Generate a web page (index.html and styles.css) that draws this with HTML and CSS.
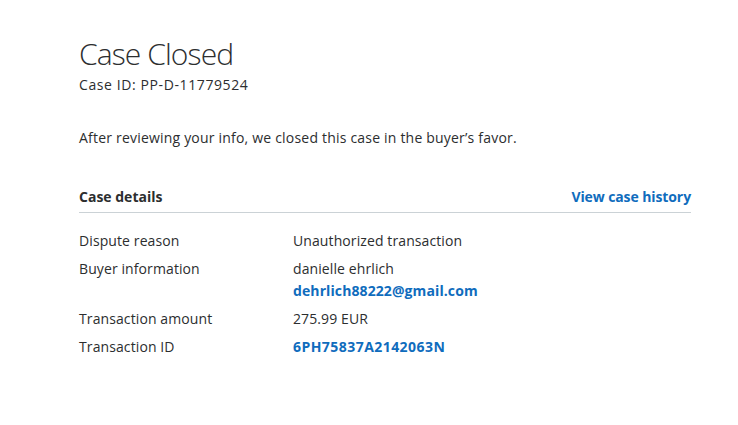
FILE: index.html
```html
<!DOCTYPE html>
<html>
<head>
<meta charset="utf-8">
<link rel="stylesheet" href="styles.css">
</head>
<body>
<main class="page">
  <h1 class="title">Case Closed</h1>
  <div class="case-id">Case ID: PP-D-11779524</div>
  <p class="summary">After reviewing your info, we closed this case in the buyer’s favor.</p>
  <div class="section-head">
    <span class="section-title">Case details</span>
    <a class="link link-history" href="#">View case history</a>
  </div>
  <dl class="details">
    <dt>Dispute reason</dt>
    <dd>Unauthorized transaction</dd>
    <dt>Buyer information</dt>
    <dd>danielle ehrlich<br><a class="link" href="#">dehrlich88222@gmail.com</a></dd>
    <dt>Transaction amount</dt>
    <dd>275.99 EUR</dd>
    <dt>Transaction ID</dt>
    <dd><a class="link link-id" href="#">6PH75837A2142063N</a></dd>
  </dl>
</main>
</body>
</html>
```
FILE: styles.css
```css
html, body {
  margin: 0;
  padding: 0;
  background: #fff;
}
body {
  font-family: "Open Sans", "Noto Sans", sans-serif;
  color: #2c2e2f;
  font-size: 14px;
  letter-spacing: 0.1px;
}
.page {
  width: 612px;
  padding: 36px 0 0 79px;
}
.title {
  margin: 0;
  font-size: 30px;
  font-weight: 300;
  line-height: 36px;
  letter-spacing: -0.9px;
}
.case-id {
  margin-top: 3px;
  line-height: 20px;
  letter-spacing: 0.6px;
}
.summary {
  margin: 33px 0 0;
  line-height: 20px;
  letter-spacing: 0.2px;
}
.section-head {
  margin-top: 39px;
  display: flex;
  justify-content: space-between;
  align-items: baseline;
  padding-bottom: 5px;
  border-bottom: 1px solid #cbd2d6;
  line-height: 20px;
}
.section-title {
  font-weight: 700;
  letter-spacing: 0;
}
.link {
  color: #0f6cbd;
  font-weight: 700;
  text-decoration: none;
}
.link-history {
  letter-spacing: -0.1px;
}
.link-id {
  letter-spacing: 0.45px;
}
.details {
  margin: 17px 0 0;
  display: grid;
  grid-template-columns: 214px 1fr;
  row-gap: 6px;
  line-height: 22px;
}
.details dt, .details dd {
  margin: 0;
}
```
